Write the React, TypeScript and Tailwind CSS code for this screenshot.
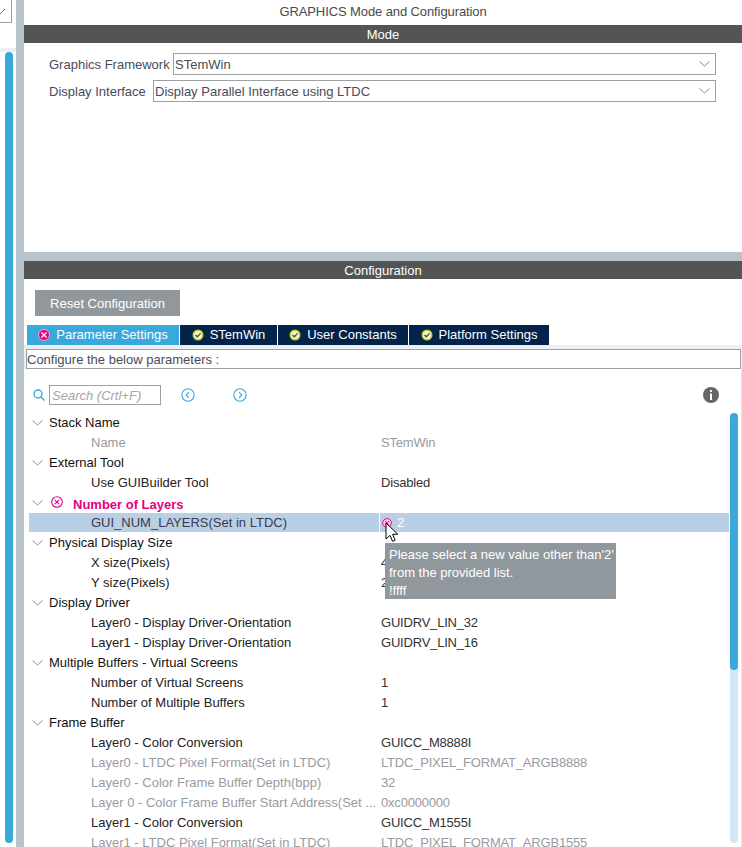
import React from 'react';

const font = "font-['Liberation_Sans',Arial,sans-serif]";

type Row = { label: string; value?: string; muted?: boolean; group?: boolean; error?: boolean; selected?: boolean };

const rows: Row[] = [
    { label: 'Stack Name', group: true },
    { label: 'Name', value: 'STemWin', muted: true },
    { label: 'External Tool', group: true },
    { label: 'Use GUIBuilder Tool', value: 'Disabled' },
    { label: 'Number of Layers', group: true, error: true },
    { label: 'GUI_NUM_LAYERS(Set in LTDC)', value: '2', selected: true },
    { label: 'Physical Display Size', group: true },
    { label: 'X size(Pixels)', value: '480' },
    { label: 'Y size(Pixels)', value: '272' },
    { label: 'Display Driver', group: true },
    { label: 'Layer0 - Display Driver-Orientation', value: 'GUIDRV_LIN_32' },
    { label: 'Layer1 - Display Driver-Orientation', value: 'GUIDRV_LIN_16' },
    { label: 'Multiple Buffers - Virtual Screens', group: true },
    { label: 'Number of Virtual Screens', value: '1' },
    { label: 'Number of Multiple Buffers', value: '1' },
    { label: 'Frame Buffer', group: true },
    { label: 'Layer0 - Color Conversion', value: 'GUICC_M8888I' },
    { label: 'Layer0 - LTDC Pixel Format(Set in LTDC)', value: 'LTDC_PIXEL_FORMAT_ARGB8888', muted: true },
    { label: 'Layer0 - Color Frame Buffer Depth(bpp)', value: '32', muted: true },
    { label: 'Layer 0 - Color Frame Buffer Start Address(Set ...', value: '0xc0000000', muted: true },
    { label: 'Layer1 - Color Conversion', value: 'GUICC_M1555I' },
    { label: 'Layer1 - LTDC Pixel Format(Set in LTDC)', value: 'LTDC_PIXEL_FORMAT_ARGB1555', muted: true },
];

const Chevron = () => (
    <svg className="shrink-0" width="11" height="6" viewBox="0 0 11 6" fill="none" stroke="#8a8a8a" strokeWidth="1">
        <path d="M0.5 0.5L5.5 5L10.5 0.5" />
    </svg>
);

const ErrorIcon = ({ size = 12, color = '#e6007e' }: { size?: number; color?: string }) => (
    <svg width={size} height={size} viewBox="0 0 12 12" fill="none" stroke={color} strokeWidth="1.1">
        <circle cx="6" cy="6" r="5.3" />
        <path d="M3.8 3.8l4.4 4.4M8.2 3.8l-4.4 4.4" />
    </svg>
);

const OkIcon = () => (
    <svg width="12" height="12" viewBox="0 0 12 12" fill="none">
        <circle cx="6" cy="6" r="5.5" fill="#c4cf1e" />
        <circle cx="6" cy="6" r="4" fill="#f4f6d0" />
        <path d="M3.5 6l1.8 1.8L8.6 4.4" stroke="#3c4a52" strokeWidth="1.3" />
    </svg>
);

const NavIcon = ({ back }: { back?: boolean }) => (
    <svg width="14" height="14" viewBox="0 0 14 14" fill="none" stroke="#39a9dc" strokeWidth="1.1">
        <circle cx="7" cy="7" r="6.2" />
        <path d={back ? 'M8 4.2L5.2 7 8 9.8' : 'M6 4.2L8.8 7 6 9.8'} />
    </svg>
);

const Select = ({ value }: { value: string }) => (
    <div className="flex-1 h-[22px] flex items-center justify-between pl-px pr-[5px] border border-[#9ba0a3] text-[#4a4a5a]">
        <span className="pt-px">{value}</span>
        <Chevron />
    </div>
);

const Tab = ({ label, active, width }: { label: string; active?: boolean; width: string }) => (
    <div className={`h-[20px] flex items-center justify-center gap-[6px] text-[13px] text-white ${width} ${active ? 'bg-[#39a9dc]' : 'bg-[#03234b]'}`}>
        {active ? (
            <span className="w-[12px] h-[12px] rounded-full bg-[#e6007e] flex items-center justify-center border border-[#f2a8d0]">
                <svg width="8" height="8" viewBox="0 0 8 8" stroke="#fff" strokeWidth="1.3"><path d="M1.5 1.5l5 5M6.5 1.5l-5 5" /></svg>
            </span>
        ) : <OkIcon />}
        {label}
    </div>
);

const TreeRow = ({ row }: { row: Row }) => {
    if (row.group) {
        return (
            <div className="h-[20px] flex items-center pl-[3px]">
                <Chevron />
                {row.error ? (
                    <>
                        <span className="ml-[8px] -mt-[3px] flex"><ErrorIcon /></span>
                        <span className="ml-[10px] mt-[4px] font-bold text-[#e6007e]">{row.label}</span>
                    </>
                ) : (
                    <span className="ml-[6px] text-[#111]">{row.label}</span>
                )}
            </div>
        );
    }
    return (
        <div className={`flex items-center ${row.selected ? 'h-[19px] mb-px bg-[#b8cfe6]' : 'h-[20px]'}`}>
            <div className={`w-[350px] shrink-0 pl-[62px] whitespace-nowrap ${row.muted ? 'text-[#9a9a9f]' : row.selected ? 'text-[#3b3b4a]' : 'text-[#222]'}`}>
                {row.label}
            </div>
            {row.selected ? (
                <div className="flex items-center text-white border-l border-white h-full">
                    <span className="ml-[2px] w-[10px] h-[10px] rounded-full bg-[#f4c4dc] flex items-center justify-center"><ErrorIcon size={10} /></span>
                    <span className="ml-[5px]">{row.value}</span>
                </div>
            ) : (
                <div className={`ml-[2px] whitespace-nowrap -tracking-[0.2px] ${row.muted ? 'text-[#9a9a9f]' : 'text-[#333]'}`}>{row.value}</div>
            )}
        </div>
    );
};

const SectionBar = ({ title }: { title: string }) => (
    <div className="h-[18px] pt-px bg-[#535554] flex items-center justify-center text-white">{title}</div>
);

export default function App() {
    return (
        <div className={`relative w-[742px] h-[847px] flex overflow-hidden bg-white text-[13px] ${font}`}>
            {/* left panel remnant */}
            <div className="w-[16px] shrink-0 flex flex-col">
                <div className="w-[12px] h-[23px] border-r border-b border-[#9ba0a3] flex items-center">
                    <svg width="6" height="7" viewBox="0 0 6 7" fill="none" stroke="#777"><path d="M0 6L5 1" /></svg>
                </div>
                <div className="h-[25px]" />
                <div className="h-[4px] bg-[#eceff2]" />
                <div className="flex-1 min-h-0 pl-[5px] pb-[4px]">
                    <div className="w-[8px] h-full rounded-[4px] bg-[#39a9dc]" />
                </div>
            </div>
            <div className="w-[8px] shrink-0 bg-[#b8c4cc]" />

            <div className="flex-1 min-w-0 flex flex-col">
                <div className="h-[25px] flex items-center justify-center -tracking-[0.1px] text-[#4a4a4a] pb-px">GRAPHICS Mode and Configuration</div>
                <SectionBar title="Mode" />
                <div className="h-[209px] pt-[10px] pl-[25px] pr-[26px] flex flex-col gap-[5px] text-[#4a4a5a]">
                    <div className="flex items-center">
                        <span className="w-[124px] shrink-0 pt-px">Graphics Framework</span>
                        <Select value="STemWin" />
                    </div>
                    <div className="flex items-center">
                        <span className="w-[104px] shrink-0 pt-px">Display Interface</span>
                        <Select value="Display Parallel Interface using LTDC" />
                    </div>
                </div>
                <div className="h-[9px] bg-[#b8c4cc]" />
                <SectionBar title="Configuration" />

                <div className="pt-[11px] pl-[11px]">
                    <div className="w-[145px] h-[26px] pt-px bg-[#90989e] flex items-center justify-center text-white">Reset Configuration</div>
                </div>
                <div className="mt-[9px] pl-[3px] flex gap-px">
                    <Tab label="Parameter Settings" active width="w-[152px]" />
                    <Tab label="STemWin" width="w-[97px]" />
                    <Tab label="User Constants" width="w-[130px]" />
                    <Tab label="Platform Settings" width="w-[140px]" />
                </div>

                <div className="bg-[#edf0f3] pt-[4px] pl-[2px] pr-px">
                    <div className="h-[20px] pt-px border border-[#9ba0a3] bg-white flex items-center text-[#4a4a5a]">Configure the below parameters :</div>
                </div>

                <div className="flex-1 min-h-0 flex pl-[5px] pr-[3px] border-r border-[#e4e4e4]">
                    <div className="flex-1 min-w-0 flex flex-col">
                        <div className="mt-[16px] h-[20px] flex items-center pl-[4px]">
                            <svg width="12" height="12" viewBox="0 0 12 12" fill="none" stroke="#39a9dc" strokeWidth="1.4">
                                <circle cx="5" cy="5" r="4" />
                                <path d="M8 8l3.5 3.5" />
                            </svg>
                            <div className="ml-[4px] w-[112px] h-[20px] pt-px border border-[#9ba0a3] flex items-center pl-[2px] italic text-[#a5a5a5]">Search (Crtl+F)</div>
                            <span className="ml-[20px] flex"><NavIcon back /></span>
                            <span className="ml-[38px] flex"><NavIcon /></span>
                            <svg className="ml-auto mr-[10px]" width="16" height="16" viewBox="0 0 16 16">
                                <circle cx="8" cy="8" r="8" fill="#666" />
                                <rect x="7" y="6.5" width="2" height="6.5" fill="#fff" />
                                <rect x="7" y="3" width="2" height="2" fill="#fff" />
                            </svg>
                        </div>
                        <div className="mt-[8px]">
                            {rows.map((row, i) => <TreeRow key={i} row={row} />)}
                        </div>
                    </div>
                    <div className="w-[8px] ml-px shrink-0 mt-[44px] mb-[4px] rounded-[4px] bg-[#d5e6f5]">
                        <div className="h-[257px] rounded-[4px] bg-[#39a9dc]" />
                    </div>
                </div>
            </div>

            {/* validation tooltip and mouse pointer */}
            <div className="absolute left-[385px] top-[543px] w-[231px] h-[56px] bg-[#90989e] text-white leading-[18px] pl-[4px] pt-[3px]">
                <div>Please select a new value other than'2'</div>
                <div>from the provided list.</div>
                <div>!ffff</div>
            </div>
            <svg className="absolute left-[385px] top-[522px]" width="14" height="21" viewBox="0 0 14 21">
                <path d="M1 1v16l4-3.6 2.6 6 2.6-1.1-2.6-5.9 5.2-.2z" fill="#fff" stroke="#000" strokeWidth="1" />
            </svg>
        </div>
    );
}
